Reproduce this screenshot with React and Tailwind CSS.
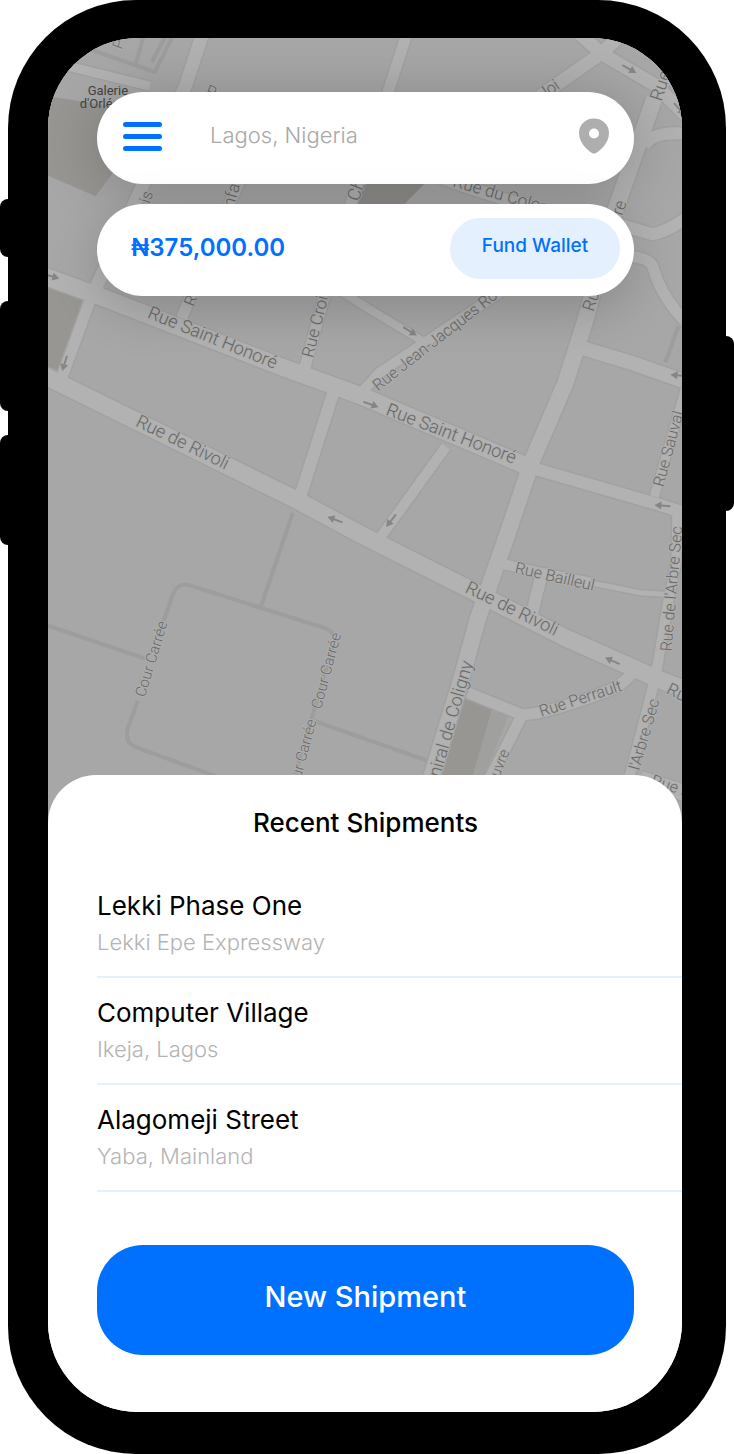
import React from "react";

const shipments = [
  { title: "Lekki Phase One", address: "Lekki Epe Expressway" },
  { title: "Computer Village", address: "Ikeja, Lagos" },
  { title: "Alagomeji Street", address: "Yaba, Mainland" },
];

// street centre lines and their widths
const roads = [
  { d: "M40 274 L100 296 L283 367 L360 395 L530 467", w: 17 },
  { d: "M530 467 L655 503 L690 514", w: 12 },
  { d: "M40 373 L294 498 L365 536 L478 593 L565 637 L655 677 L690 691", w: 17 },
  { d: "M654 98 L614 213 L585 320 L565 383 L532 460 L505 540 L478 617 L462 675 L430 780", w: 16 },
  { d: "M91 298 L62 378", w: 11 },
  { d: "M408 30 L388 92 L355 190 L326 290 L303 374", w: 11 },
  { d: "M204 30 L186 85 L150 170 L95 290", w: 13 },
  { d: "M240 180 L196 282 L182 318", w: 11 },
  { d: "M334 390 L300 497", w: 12 },
  { d: "M446 446 L378 540", w: 10 },
  { d: "M358 396 L380 372 L500 292", w: 10 },
  { d: "M340 290 L368 308 L428 344", w: 8 },
  { d: "M580 347 L630 362 L690 383", w: 14 },
  { d: "M686 385 L654 496", w: 9 },
  { d: "M677 508 L676 560 L668 600 L655 677 L628 780", w: 10 },
  { d: "M502 563 L535 571 L590 582", w: 10 },
  { d: "M590 582 L640 592 L672 594", w: 5 },
  { d: "M541 575 L531 616", w: 12 },
  { d: "M468 692 L522 714 Q545 713 600 693 Q622 686 636 668", w: 11 },
  { d: "M521 716 L486 785", w: 11 },
  { d: "M575 30 L602 54 L655 85 L690 120", w: 13 },
  { d: "M620 36 L600 54 L540 96", w: 13 },
  { d: "M690 42 L654 98", w: 11 },
  { d: "M644 146 Q652 130 690 134", w: 12 },
  { d: "M618 224 L652 234 Q666 232 690 215", w: 12 },
  { d: "M622 256 Q650 256 653 268 Q662 300 690 326", w: 11 },
  { d: "M420 170 L470 188 L540 210", w: 12 },
  { d: "M640 778 L690 794", w: 16 },
  { d: "M60 64 L150 86", w: 9 },
];

const footpaths = [
  "M293 512 L261 606",
  "M40 622 L146 658",
  "M163 623 L173 594 Q178 582 188 584 L327 628 Q336 632 333 645 L302 750 L292 784",
  "M138 700 L128 728 Q124 742 138 747 L240 784",
  "M314 720 L428 760",
  "M152 62 L165 38",
  "M70 42 L155 72 L172 38",
  "M144 36 L136 64",
  "M678 326 L665 362",
];

const labels = [
  { t: "Rue Saint Honoré", x: 147, y: 317, r: 22, s: 18 },
  { t: "Rue Saint Honoré", x: 385, y: 414, r: 21, s: 18 },
  { t: "Rue de Rivoli", x: 135, y: 425, r: 26, s: 18 },
  { t: "Rue de Rivoli", x: 464, y: 591, r: 26, s: 18 },
  { t: "Rue Jean-Jacques Rousseau", x: 378, y: 391, r: -38, s: 16 },
  { t: "Rue Croix", x: 313, y: 358, r: -76, s: 17 },
  { t: "Rue", x: 194, y: 307, r: -68, s: 16 },
  { t: "Rue", x: 593, y: 312, r: -72, s: 17 },
  { t: "Rue", x: 661, y: 102, r: -72, s: 18 },
  { t: "Rue Sauval", x: 663, y: 487, r: -75, s: 16 },
  { t: "Rue Bailleul", x: 514, y: 572, r: 13, s: 16 },
  { t: "Rue Perrault", x: 541, y: 716, r: -18, s: 16 },
  { t: "Rue de l'Arbre Sec", x: 671, y: 651, r: -85, s: 16 },
  { t: "Rue", x: 665, y: 692, r: 27, s: 17 },
  { t: "l'Arbre Sec", x: 639, y: 770, r: -74, s: 16 },
  { t: "Rue Ba", x: 650, y: 784, r: 18, s: 16 },
  { t: "niral de Coligny", x: 440, y: 777, r: -74, s: 18 },
  { t: "uvre", x: 499, y: 777, r: -68, s: 15 },
  { t: "Cour Carrée", x: 145, y: 697, r: -73, s: 15 },
  { t: "Cour Carrée", x: 321, y: 709, r: -75, s: 15 },
  { t: "ur Carrée", x: 301, y: 778, r: -75, s: 15 },
  { t: "Rue du Colonel", x: 452, y: 186, r: 16, s: 17 },
  { t: "Ch", x: 358, y: 202, r: -68, s: 18 },
  { t: "nfants", x: 234, y: 208, r: -75, s: 17 },
  { t: "is", x: 150, y: 204, r: -72, s: 16 },
  { t: "P", x: 205, y: 95, r: 20, s: 16 },
  { t: "P", x: 122, y: 50, r: -70, s: 15 },
  { t: "loi", x: 547, y: 97, r: -35, s: 16 },
  { t: "re", x: 622, y: 216, r: -72, s: 17 },
];

const arrows = [
  { x: 52, y: 276, r: 15 },
  { x: 65, y: 363, r: 108 },
  { x: 335, y: 519, r: 200 },
  { x: 371, y: 404, r: 20 },
  { x: 391, y: 520, r: 128 },
  { x: 410, y: 331, r: 32 },
  { x: 629, y: 69, r: 30 },
  { x: 678, y: 375, r: 185 },
  { x: 662, y: 505, r: 185 },
  { x: 612, y: 660, r: 204 },
  { x: 679, y: 109, r: 48 },
];

function StreetMap() {
  return (
    <svg
      className="absolute inset-0 h-full w-full"
      viewBox="48 38 634 784"
      preserveAspectRatio="xMidYMin slice"
      aria-hidden="true"
    >
      <rect x="0" y="0" width="734" height="900" fill="#a7a7a7" />
      <g fill="#989692">
        <path d="M40 95 L112 106 L130 150 L96 196 L40 172 Z" />
        <path d="M40 284 L86 300 L58 370 L40 362 Z" />
        <path d="M362 180 L428 180 L402 206 L352 206 Z" fill="#8f8e8b" />
        <path d="M463 697 L492 708 L470 785 L436 785 Z" />
        <path d="M492 708 L509 714 L480 785 L470 785 Z" fill="#a0a09f" />
      </g>
      <g fill="none" stroke="#9d9d9c" strokeWidth="4" strokeLinejoin="round">
        {footpaths.map((d) => (
          <path key={d} d={d} />
        ))}
      </g>
      <g fill="none" stroke="#a1a1a1" strokeLinejoin="round">
        {roads.map((r) => (
          <path key={r.d} d={r.d} strokeWidth={r.w + 3} />
        ))}
      </g>
      <g fill="none" stroke="#b2b2b2" strokeLinejoin="round">
        {roads.map((r) => (
          <path key={r.d} d={r.d} strokeWidth={r.w} />
        ))}
      </g>
      <g fill="none" stroke="#868686" strokeWidth="2">
        {arrows.map((a) => (
          <g key={a.x} transform={`translate(${a.x} ${a.y}) rotate(${a.r})`}>
            <path d="M-8 0 H4" />
            <path d="M1 -4 L8 0 L1 4 Z" fill="#868686" stroke="none" />
          </g>
        ))}
      </g>
      <g
        fontFamily="Roboto, sans-serif"
        fontWeight="300"
        fill="#686867"
        stroke="#aeaeae"
        strokeWidth="2"
        paintOrder="stroke"
      >
        {labels.map((l) => (
          <text key={`${l.x}-${l.y}`} fontSize={l.s} transform={`translate(${l.x} ${l.y}) rotate(${l.r})`}>
            {l.t}
          </text>
        ))}
      </g>
      <g fontFamily="Roboto, sans-serif" fontSize="13" fill="#444444">
        <text x="88" y="95">Galerie</text>
        <text x="80" y="108">d'Orléans</text>
      </g>
    </svg>
  );
}

function PinIcon() {
  return (
    <svg className="h-9 w-[30px]" viewBox="0 0 30 36" aria-hidden="true">
      <path
        fill="#aeaeae"
        fillRule="evenodd"
        d="M15 0.5 C6.5 0.5 0 6.8 0 15 C0 24 7 31.5 13 34.9 Q15 36 17 34.9 C23 31.5 30 24 30 15 C30 6.8 23.5 0.5 15 0.5 Z M15 10.5 a5 5 0 1 1 0 10 a5 5 0 1 1 0 -10 Z"
      />
    </svg>
  );
}

function SearchBar() {
  return (
    <div className="flex h-[92px] items-center rounded-full bg-white pr-[25px] pb-1 pl-[26px] shadow-[0_6px_60px_rgba(0,0,0,0.22)]">
      <button type="button" aria-label="Menu" className="flex w-[39px] shrink-0 flex-col gap-[7px]">
        <span className="h-[5px] rounded-full bg-[#0071ff]" />
        <span className="h-[5px] rounded-full bg-[#0071ff]" />
        <span className="h-[5px] rounded-full bg-[#0071ff]" />
      </button>
      <label htmlFor="location" className="sr-only">
        Location
      </label>
      <input
        id="location"
        type="text"
        placeholder="Lagos, Nigeria"
        className="ml-12 min-w-0 flex-1 bg-transparent pb-0.5 text-[22px] leading-8 font-light text-[#a8a8a8] outline-none placeholder:text-[#a8a8a8]"
      />
      <button type="button" aria-label="Use my location" className="shrink-0">
        <PinIcon />
      </button>
    </div>
  );
}

function WalletBar() {
  return (
    <div className="flex h-[92px] items-center justify-between rounded-full bg-white pr-3.5 pb-1 pl-[34px] shadow-[0_14px_50px_rgba(0,0,0,0.18)]">
      <p className="text-2xl font-semibold text-[#0071ff]">₦375,000.00</p>
      <button
        type="button"
        className="h-[61px] w-[170px] rounded-full bg-[#e4f0fe] pb-1 text-[19px] font-medium text-[#0071ff]"
      >
        Fund Wallet
      </button>
    </div>
  );
}

function Shipments() {
  return (
    <section className="relative -mt-12 rounded-t-[48px] bg-white pt-7 pb-[57px] pl-[49px]">
      <h2 className="pr-12 text-center text-[26px] leading-10 font-medium text-black">Recent Shipments</h2>
      <ul className="mt-7">
        {shipments.map((s) => (
          <li key={s.title} className="border-b-2 border-[#e4f0fb] pt-[19px] pb-[18px]">
            <h3 className="text-[26px] leading-8 text-black">{s.title}</h3>
            <p className="mt-1 text-[22px] leading-8 font-light text-[#b4b4b4]">{s.address}</p>
          </li>
        ))}
      </ul>
      <div className="mt-[53px] pr-12">
        <button
          type="button"
          className="h-[110px] w-full rounded-[46px] bg-[#0071ff] pb-1.5 text-[29px] font-medium text-white"
        >
          New Shipment
        </button>
      </div>
    </section>
  );
}

export default function App() {
  return (
    <div className="relative flex min-h-screen bg-white px-2 font-['Inter',sans-serif]">
      {/* hardware buttons */}
      <span className="absolute top-[199px] left-0 h-[58px] w-4 rounded-l-lg bg-black" />
      <span className="absolute top-[301px] left-0 h-[110px] w-4 rounded-l-lg bg-black" />
      <span className="absolute top-[435px] left-0 h-[110px] w-4 rounded-l-lg bg-black" />
      <span className="absolute top-[336px] right-0 h-[175px] w-4 rounded-r-lg bg-black" />

      <div className="relative flex flex-1 rounded-[128px] bg-black pt-[38px] pr-11 pb-[42px] pl-10">
        <main className="flex min-w-0 flex-1 flex-col overflow-hidden rounded-[90px] bg-white">
          <div className="relative min-h-[400px] flex-1">
            <StreetMap />
            <div className="relative flex flex-col gap-5 pt-[54px] pr-12 pl-[49px]">
              <SearchBar />
              <WalletBar />
            </div>
          </div>
          <Shipments />
        </main>
      </div>
    </div>
  );
}
